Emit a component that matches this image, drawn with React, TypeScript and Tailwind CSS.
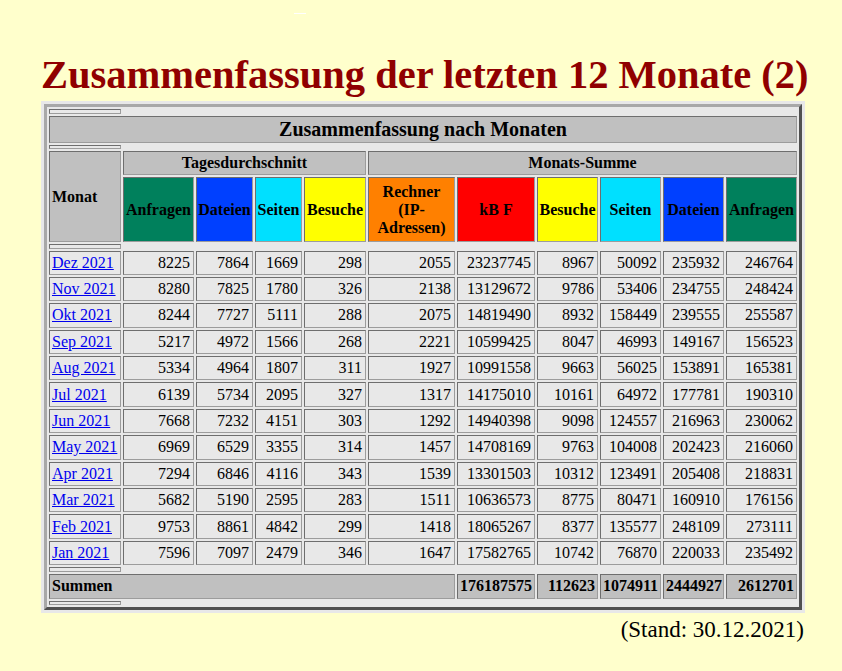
import React from "react";

const rows: [string, number[]][] = [
  ["Dez 2021", [8225, 7864, 1669, 298, 2055, 23237745, 8967, 50092, 235932, 246764]],
  ["Nov 2021", [8280, 7825, 1780, 326, 2138, 13129672, 9786, 53406, 234755, 248424]],
  ["Okt 2021", [8244, 7727, 5111, 288, 2075, 14819490, 8932, 158449, 239555, 255587]],
  ["Sep 2021", [5217, 4972, 1566, 268, 2221, 10599425, 8047, 46993, 149167, 156523]],
  ["Aug 2021", [5334, 4964, 1807, 311, 1927, 10991558, 9663, 56025, 153891, 165381]],
  ["Jul 2021", [6139, 5734, 2095, 327, 1317, 14175010, 10161, 64972, 177781, 190310]],
  ["Jun 2021", [7668, 7232, 4151, 303, 1292, 14940398, 9098, 124557, 216963, 230062]],
  ["May 2021", [6969, 6529, 3355, 314, 1457, 14708169, 9763, 104008, 202423, 216060]],
  ["Apr 2021", [7294, 6846, 4116, 343, 1539, 13301503, 10312, 123491, 205408, 218831]],
  ["Mar 2021", [5682, 5190, 2595, 283, 1511, 10636573, 8775, 80471, 160910, 176156]],
  ["Feb 2021", [9753, 8861, 4842, 299, 1418, 18065267, 8377, 135577, 248109, 273111]],
  ["Jan 2021", [7596, 7097, 2479, 346, 1647, 17582765, 10742, 76870, 220033, 235492]],
];

const sums = [176187575, 112623, 1074911, 2444927, 2612701];

const cell =
  "border border-solid border-t-[#6e6e6e] border-l-[#6e6e6e] border-r-[#9c9c9c] border-b-[#9c9c9c]";

function Spacer() {
  return (
    <tr>
      <td className={`${cell} h-[4.5px] p-0`}></td>
    </tr>
  );
}

const hdr = `${cell} px-[1px] py-[2px] text-center font-bold text-[16px] text-black leading-[18px]`;

export default function App() {
  return (
    <div className="min-h-screen bg-[#ffffcc] font-['Liberation_Serif','Times_New_Roman',serif] text-black pt-[13px]">
      <div className="ml-[294px] h-[1px] w-[12px] bg-white"></div>
      <div className="ml-[41px] w-[764px]">
        <h1 className="mt-[41px] text-center text-[40.5px] leading-[40px] font-bold text-[#900000] whitespace-nowrap">
          Zusammenfassung der letzten 12 Monate (2)
        </h1>
        <div className="mt-[6px] bg-[#e8e8e8] p-[3px]">
          <table className="table-fixed w-[758px] border-separate border-spacing-[2px] bg-[#e8e8e8] border-[3px] border-solid border-t-[#a8a8a8] border-l-[#a8a8a8] border-r-[#505050] border-b-[#505050] text-[16px] leading-[18px]">
            <colgroup>
              <col className="w-[72px]" />
              <col className="w-[71px]" />
              <col className="w-[57px]" />
              <col className="w-[47px]" />
              <col className="w-[62px]" />
              <col className="w-[87px]" />
              <col className="w-[78px]" />
              <col className="w-[61px]" />
              <col className="w-[61px]" />
              <col className="w-[61px]" />
              <col className="w-[71px]" />
            </colgroup>
            <tbody>
              <Spacer />
              <tr>
                <th
                  colSpan={11}
                  className={`${cell} h-[27px] p-[2px] bg-[#c0c0c0] text-center font-bold text-[20px] leading-[21px]`}
                >
                  Zusammenfassung nach Monaten
                </th>
              </tr>
              <Spacer />
              <tr>
                <th
                  rowSpan={2}
                  className={`${cell} p-[2px] bg-[#c0c0c0] text-left font-bold align-middle`}
                >
                  Monat
                </th>
                <th colSpan={4} className={`${hdr} h-[24px] bg-[#c0c0c0]`}>
                  Tagesdurchschnitt
                </th>
                <th colSpan={6} className={`${hdr} h-[24px] bg-[#c0c0c0]`}>
                  Monats-Summe
                </th>
              </tr>
              <tr>
                <th className={`${hdr} h-[65px] bg-[#00805c]`}>Anfragen</th>
                <th className={`${hdr} bg-[#0040ff]`}>Dateien</th>
                <th className={`${hdr} bg-[#00e0ff]`}>Seiten</th>
                <th className={`${hdr} bg-[#ffff00]`}>Besuche</th>
                <th className={`${hdr} bg-[#ff8000]`}>Rechner (IP-Adressen)</th>
                <th className={`${hdr} bg-[#ff0000]`}>kB F</th>
                <th className={`${hdr} bg-[#ffff00]`}>Besuche</th>
                <th className={`${hdr} bg-[#00e0ff]`}>Seiten</th>
                <th className={`${hdr} bg-[#0040ff]`}>Dateien</th>
                <th className={`${hdr} bg-[#00805c]`}>Anfragen</th>
              </tr>
              <Spacer />
              {rows.map(([m, vals]) => (
                <tr key={m}>
                  <td className={`${cell} h-[24.4px] px-[2px] py-0 text-left whitespace-nowrap`}>
                    <a href="#" className="text-[#0000ee] underline">
                      {m}
                    </a>
                  </td>
                  {vals.map((v, i) => (
                    <td
                      key={i}
                      className={`${cell} px-[3px] py-0 text-right whitespace-nowrap`}
                    >
                      {v}
                    </td>
                  ))}
                </tr>
              ))}
              <Spacer />
              <tr>
                <th
                  colSpan={6}
                  className={`${cell} h-[25px] px-[2px] py-0 bg-[#c0c0c0] text-left font-bold`}
                >
                  Summen
                </th>
                {sums.map((s, i) => (
                  <th
                    key={i}
                    className={`${cell} px-[2px] py-0 bg-[#c0c0c0] text-right font-bold whitespace-nowrap`}
                  >
                    {s}
                  </th>
                ))}
              </tr>
              <Spacer />
            </tbody>
          </table>
        </div>
        <div className="mt-[5px] text-right text-[23px] leading-[23px] pr-[1px]">
          (Stand: 30.12.2021)
        </div>
      </div>
    </div>
  );
}
